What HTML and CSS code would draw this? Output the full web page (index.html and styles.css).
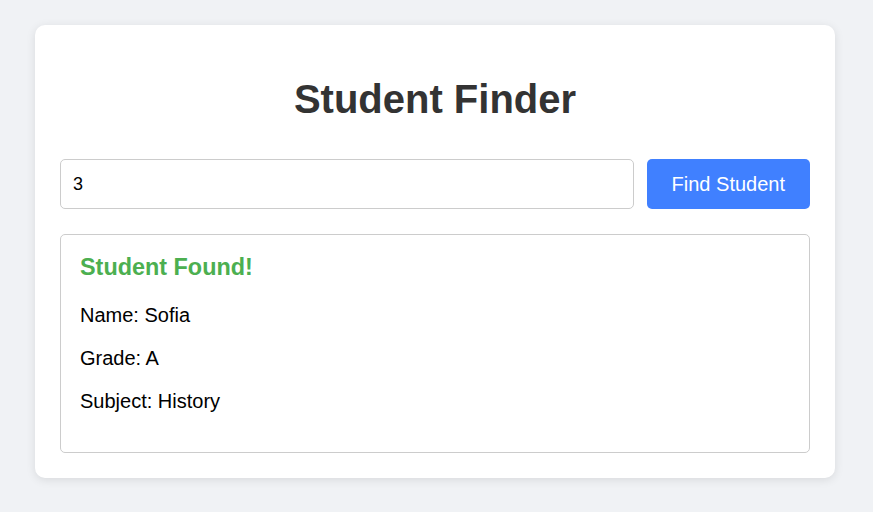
FILE: index.html
```html
<!DOCTYPE html>
<html lang="en">
<head>
<meta charset="utf-8">
<title>Student Finder</title>
<link rel="stylesheet" href="styles.css">
</head>
<body>
<div class="card">
  <h1 class="title">Student Finder</h1>
  <div class="search">
    <input class="search-input" type="text" value="3">
    <button class="search-btn" type="button">Find Student</button>
  </div>
  <div class="result">
    <h3 class="result-title">Student Found!</h3>
    <p class="result-line">Name: Sofia</p>
    <p class="result-line">Grade: A</p>
    <p class="result-line">Subject: History</p>
  </div>
</div>
</body>
</html>
```

FILE: styles.css
```css
html, body {
  margin: 0;
  padding: 0;
}
body {
  background: #f0f2f5;
  font-family: "Liberation Sans", Arial, sans-serif;
  font-size: 20px;
  padding: 25px 0 0 35px;
  min-height: 512px;
  box-sizing: border-box;
}
.card {
  width: 800px;
  box-sizing: border-box;
  background: #fff;
  border-radius: 10px;
  box-shadow: 0 2px 10px rgba(0, 0, 0, 0.1);
  padding: 25px;
}
.title {
  margin: 27px 0 37px;
  font-size: 40px;
  font-weight: bold;
  color: #333;
  text-align: center;
}
.search {
  display: flex;
  gap: 13px;
  margin-bottom: 25px;
}
.search-input {
  flex: 1;
  min-width: 0;
  font-family: "Liberation Sans", Arial, sans-serif;
  font-size: 18px;
  padding: 12px;
  border: 1px solid #ccc;
  border-radius: 5px;
  color: #000;
  outline: none;
}
.search-btn {
  font-family: "Liberation Sans", Arial, sans-serif;
  font-size: 20px;
  line-height: 24px;
  padding: 13px 25px;
  border: none;
  border-radius: 5px;
  background: #4080ff;
  color: #fff;
  cursor: pointer;
}
.result {
  border: 1px solid #ccc;
  border-radius: 5px;
  padding: 19px 19px 19px;
}
.result-title {
  margin: 0 0 1em;
  font-size: 1.17em;
  color: #4caf50;
}
.result-line {
  margin: 20px 0;
  color: #000;
}
```
